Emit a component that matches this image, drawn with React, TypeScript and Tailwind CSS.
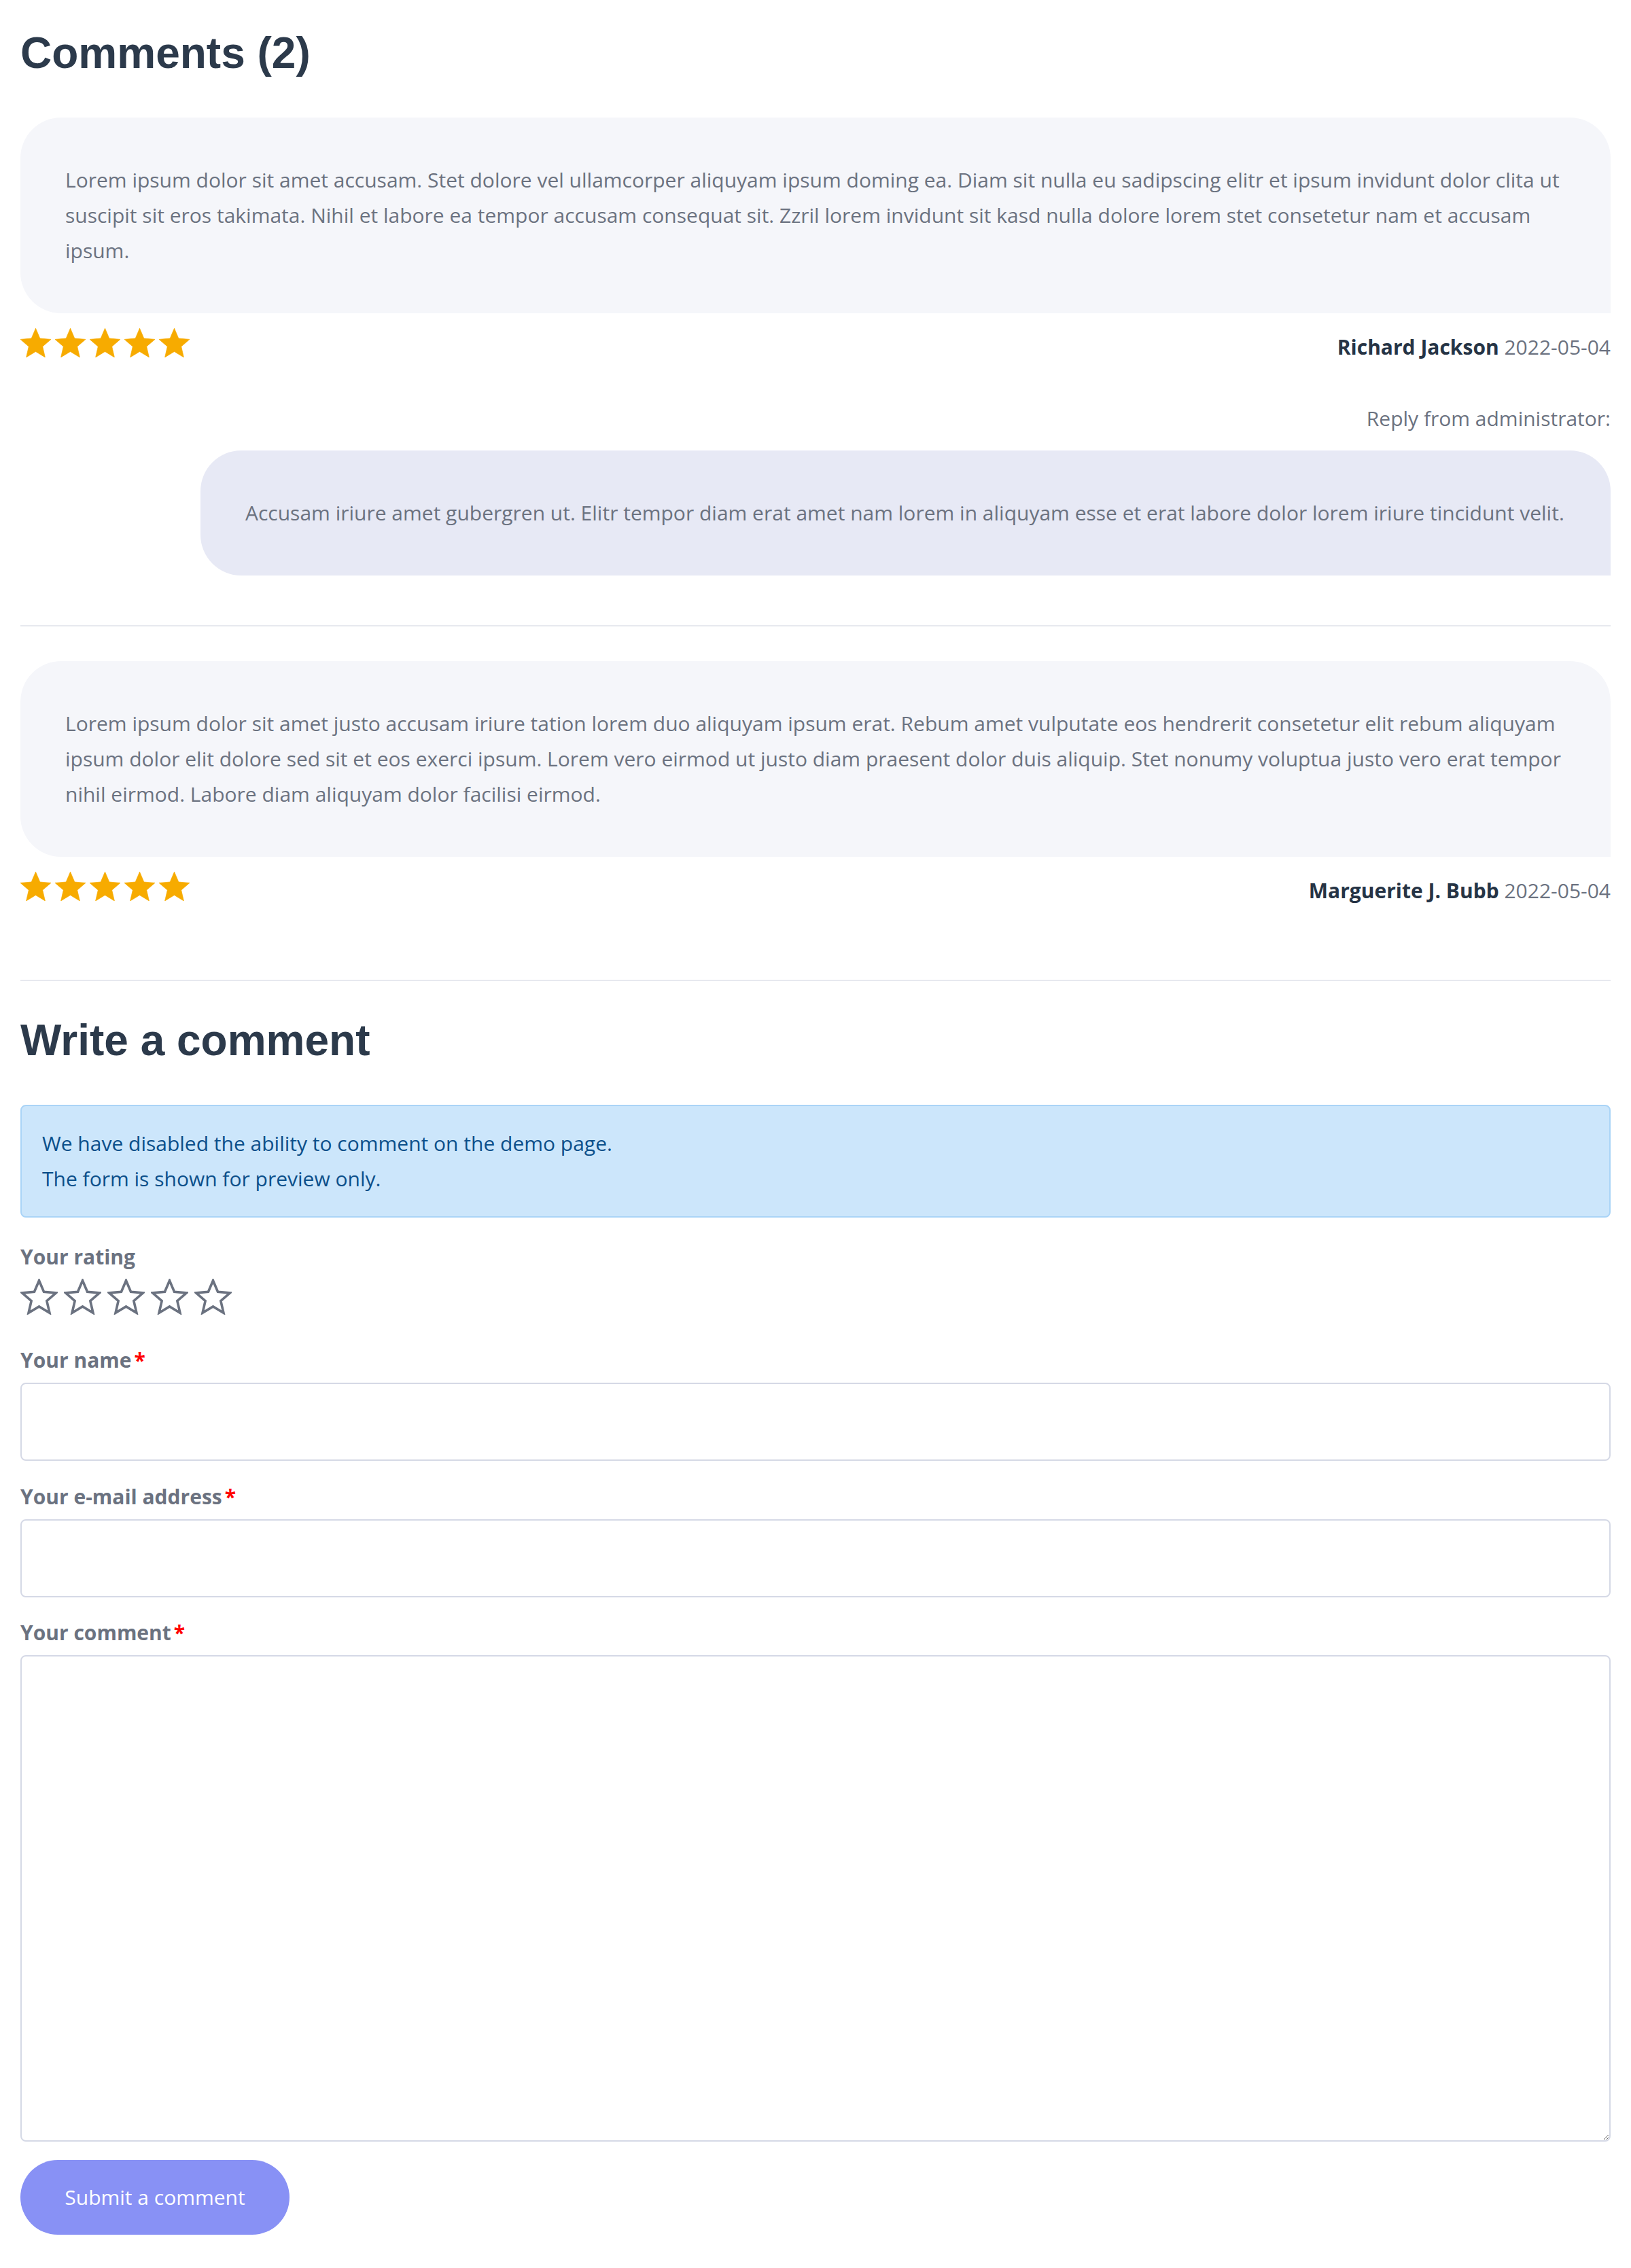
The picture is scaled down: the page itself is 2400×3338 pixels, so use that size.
import React from "react";

const STAR = "12,2 14.81,8.63 22,9.24 16.54,13.97 18.18,21 12,17.27 5.82,21 7.46,13.97 2,9.24 9.19,8.63";

function FilledStars() {
  return (
    <div className="flex gap-[6px]">
      {[0, 1, 2, 3, 4].map((i) => (
        <svg key={i} viewBox="2 2 20 19" className="block w-[45px] h-[43px]">
          <polygon points={STAR} fill="#f7ab00" stroke="#f7ab00" strokeWidth="0.3" strokeLinejoin="round" />
        </svg>
      ))}
    </div>
  );
}

function OutlineStars() {
  return (
    <div className="flex gap-[9px]">
      {[0, 1, 2, 3, 4].map((i) => (
        <svg key={i} viewBox="1 1 22 21" className="block w-[55px] h-[53px]">
          <polygon points={STAR} fill="none" stroke="#6b7280" strokeWidth="1.45" strokeLinejoin="miter" />
        </svg>
      ))}
    </div>
  );
}

function Label({ children, req }: { children: React.ReactNode; req?: boolean }) {
  return (
    <div className="font-bold text-[#6b7280] leading-[52px]">
      {children}
      {req && <span className="text-[#ff0000] ml-[4px]">*</span>}
    </div>
  );
}

export default function App() {
  return (
    <div className="bg-white min-h-[3338px] px-[30px] pt-[40px] pb-[50px] font-['Open_Sans',sans-serif] text-[30px] leading-[52px] text-[#6b7280]">
      <h2 className="font-['Liberation_Sans',Arial,sans-serif] font-bold text-[64px] leading-[76px] text-[#2c3a4b]">
        Comments (2)
      </h2>

      <div className="mt-[57px]">
        <div className="bg-[#f5f6fa] rounded-[60px] rounded-br-none pl-[66px] pr-[64px] py-[66px]">
          <p>
            Lorem ipsum dolor sit amet accusam. Stet dolore vel ullamcorper aliquyam ipsum doming ea. Diam sit nulla eu sadipscing elitr et ipsum invidunt dolor clita ut suscipit sit eros takimata. Nihil et labore ea tempor accusam consequat sit. Zzril lorem invidunt sit kasd nulla dolore lorem stet consetetur nam et accusam ipsum.
          </p>
        </div>
        <div className="mt-[22px] flex justify-between items-start">
          <FilledStars />
          <div className="mt-[2px]">
            <span className="font-bold text-[#263445]">Richard Jackson</span> 2022-05-04
          </div>
        </div>
        <div className="mt-[53px] text-right">Reply from administrator:</div>
        <div className="mt-[21px] ml-[265px] bg-[#e7e9f5] rounded-[60px] rounded-br-none pl-[66px] pr-[64px] py-[66px]">
          <p>
            Accusam iriure amet gubergren ut. Elitr tempor diam erat amet nam lorem in aliquyam esse et erat labore dolor lorem iriure tincidunt velit.
          </p>
        </div>
      </div>

      <div className="mt-[73px] h-[2px] bg-[#e7e9ef]" />

      <div className="mt-[51px]">
        <div className="bg-[#f5f6fa] rounded-[60px] rounded-br-none pl-[66px] pr-[64px] py-[66px]">
          <p>
            Lorem ipsum dolor sit amet justo accusam iriure tation lorem duo aliquyam ipsum erat. Rebum amet vulputate eos hendrerit consetetur elit rebum aliquyam ipsum dolor elit dolore sed sit et eos exerci ipsum. Lorem vero eirmod ut justo diam praesent dolor duis aliquip. Stet nonumy voluptua justo vero erat tempor nihil eirmod. Labore diam aliquyam dolor facilisi eirmod.
          </p>
        </div>
        <div className="mt-[22px] flex justify-between items-start">
          <FilledStars />
          <div className="mt-[2px]">
            <span className="font-bold text-[#263445]">Marguerite J. Bubb</span> 2022-05-04
          </div>
        </div>
      </div>

      <div className="mt-[105px] h-[2px] bg-[#e7e9ef]" />

      <h2 className="mt-[49px] font-['Liberation_Sans',Arial,sans-serif] font-bold text-[64px] leading-[76px] text-[#2c3a4b]">
        Write a comment
      </h2>

      <div className="mt-[57px] bg-[#cce6fb] border-2 border-[#aad4f7] rounded-[8px] px-[30px] py-[29px] text-[#0b4f8a]">
        <p>We have disabled the ability to comment on the demo page.</p>
        <p>The form is shown for preview only.</p>
      </div>

      <div className="mt-[32px]">
        <Label>Your rating</Label>
      </div>
      <div className="mt-[6px]">
        <OutlineStars />
      </div>

      <div className="mt-[41px]">
        <Label req>Your name</Label>
      </div>
      <input type="text" className="mt-[7px] block w-full h-[115px] border-2 border-[#d5d9e6] rounded-[8px] bg-white px-[20px] outline-none" />

      <div className="mt-[27px]">
        <Label req>Your e-mail address</Label>
      </div>
      <input type="email" className="mt-[7px] block w-full h-[115px] border-2 border-[#d5d9e6] rounded-[8px] bg-white px-[20px] outline-none" />

      <div className="mt-[26px]">
        <Label req>Your comment</Label>
      </div>
      <textarea className="mt-[7px] block w-full h-[716px] border-2 border-[#d5d9e6] rounded-[8px] bg-white p-[20px] outline-none resize-y" />

      <button className="mt-[27px] block w-[396px] h-[110px] rounded-full bg-[#8891f5] text-white text-[30px] leading-[52px]">
        Submit a comment
      </button>
    </div>
  );
}
